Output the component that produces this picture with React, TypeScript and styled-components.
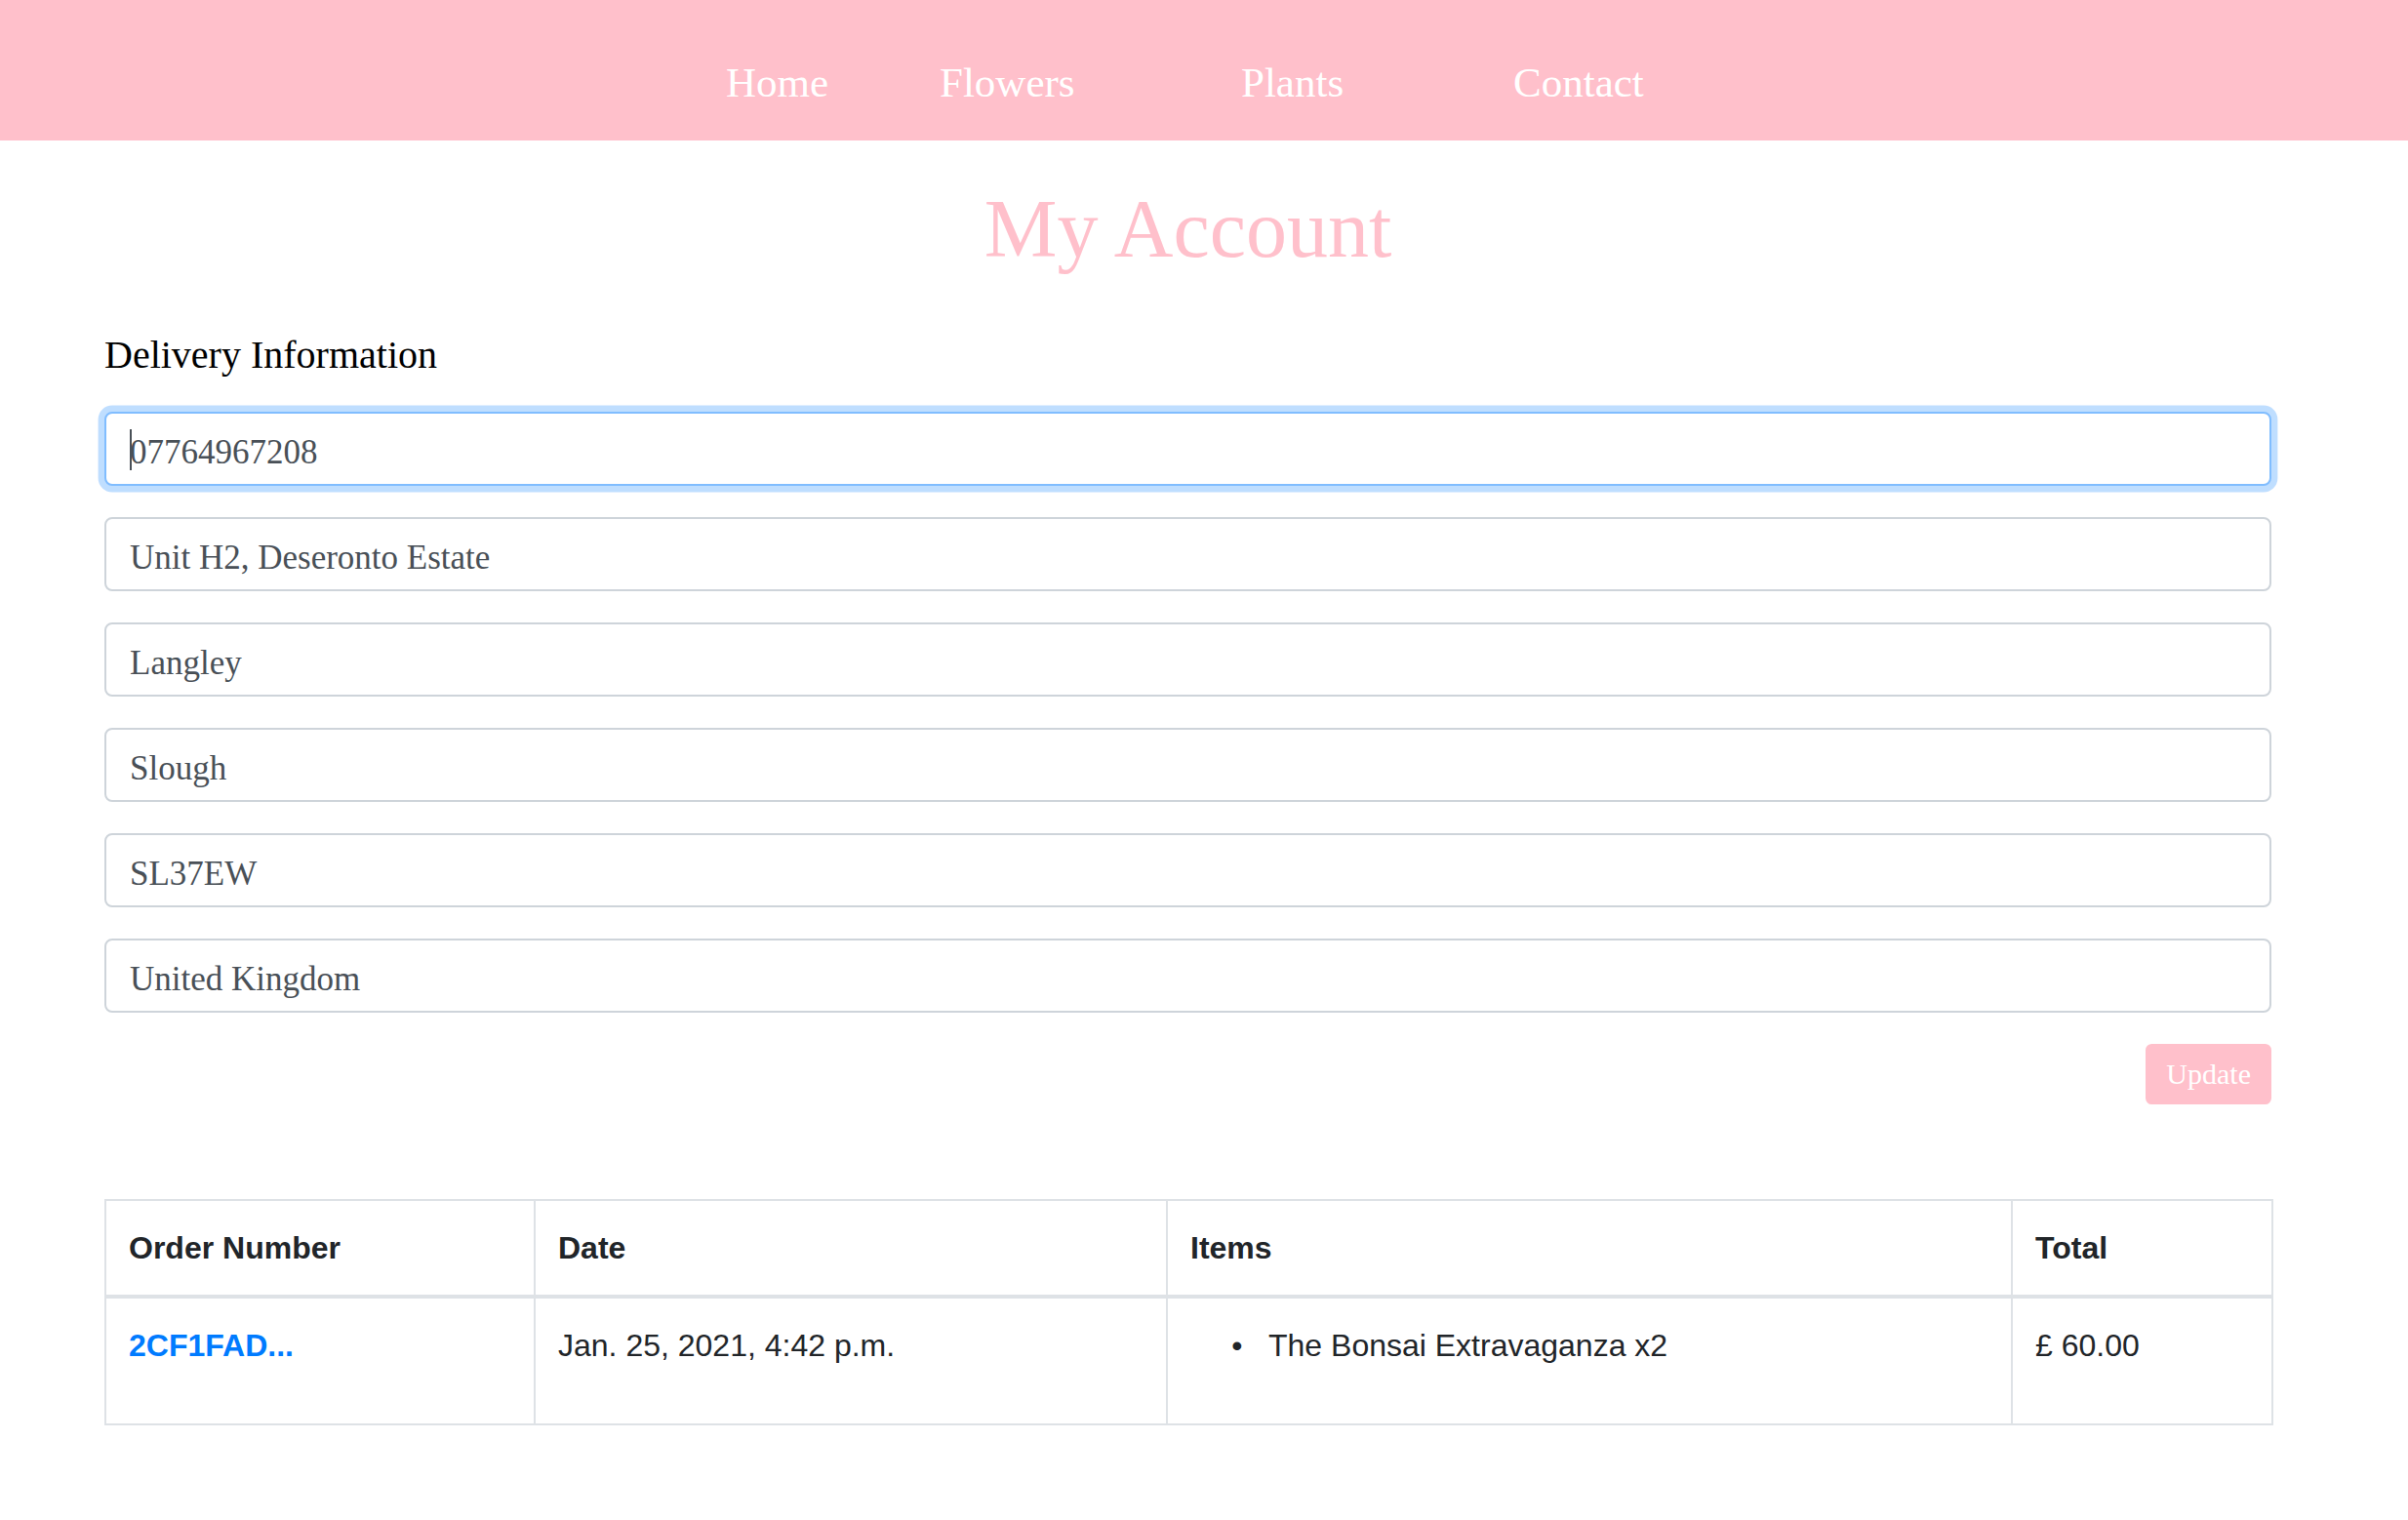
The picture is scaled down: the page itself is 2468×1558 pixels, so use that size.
import React from "react";
import styled, { createGlobalStyle } from "styled-components";

const PINK = "#ffc0cb";

const GlobalStyle = createGlobalStyle`
  html, body {
    margin: 0;
    padding: 0;
    background: #ffffff;
  }
  body {
    font-family: "Liberation Serif", "Times New Roman", serif;
    color: #212529;
  }
  * { box-sizing: border-box; }
`;

const NavBar = styled.nav`
  height: 144px;
  background: ${PINK};
  width: 100%;
`;

const NavList = styled.ul`
  list-style: none;
  margin: 0;
  padding: 60px 32px 0 0;
  display: flex;
  justify-content: center;
`;

const NavItem = styled.li<{ $width: number }>`
  width: ${(p) => p.$width}px;
  flex: 0 0 auto;
`;

const NavLink = styled.a`
  font-family: "Liberation Serif", "Times New Roman", serif;
  font-size: 43px;
  line-height: normal;
  color: #ffffff;
  text-decoration: none;
  white-space: nowrap;
`;

const Page = styled.div`
  padding-right: 33px;
`;

const Container = styled.main`
  width: 2221px;
  margin: 0 auto;
`;

const Title = styled.h1`
  margin: 43px 0 0;
  font-family: "Liberation Serif", "Times New Roman", serif;
  font-weight: 400;
  font-size: 84px;
  line-height: 96px;
  color: ${PINK};
  text-align: center;
`;

const SectionTitle = styled.h5`
  margin: 57px 0 34px;
  font-family: "Liberation Serif", "Times New Roman", serif;
  font-weight: 400;
  font-size: 40px;
  line-height: 48px;
  color: #000000;
`;

const Form = styled.form`
  display: flex;
  flex-direction: column;
`;

const Field = styled.div`
  position: relative;
  margin: 0 0 32px;
`;

const Caret = styled.span`
  position: absolute;
  left: 26px;
  top: 18px;
  width: 2px;
  height: 42px;
  background: #495057;
  pointer-events: none;
`;

const Input = styled.input<{ $focused?: boolean }>`
  display: block;
  width: 100%;
  height: 76px;
  margin: 0;
  padding: 7px 24px 0;
  font-family: "Liberation Serif", "Times New Roman", serif;
  font-size: 35px;
  color: #495057;
  background: #ffffff;
  border: 2px solid ${(p) => (p.$focused ? "#80bdff" : "#ced4da")};
  border-radius: 8px;
  box-shadow: ${(p) => (p.$focused ? "0 0 0 6.4px rgba(0, 123, 255, 0.25)" : "none")};
  outline: none;
  caret-color: transparent;
`;

const ButtonRow = styled.div`
  display: flex;
  justify-content: flex-end;
`;

const UpdateButton = styled.button`
  height: 62px;
  padding: 0 19px;
  background: ${PINK};
  color: #ffffff;
  border: 2px solid ${PINK};
  border-radius: 6.4px;
  font-family: "Liberation Serif", "Times New Roman", serif;
  font-size: 30px;
  line-height: 1;
  cursor: pointer;
`;

const OrdersTable = styled.table`
  margin-top: 97px;
  width: 100%;
  table-layout: fixed;
  border-collapse: collapse;
  border: 2px solid #dee2e6;
  font-family: "Liberation Sans", Arial, sans-serif;
  font-size: 32px;
  line-height: 48px;
  color: #212529;
`;

const HeadCell = styled.th`
  text-align: left;
  font-weight: 700;
  padding: 24px 24px 24px 23px;
  vertical-align: bottom;
  border: 2px solid #dee2e6;
  border-bottom-width: 4px;
`;

const Cell = styled.td`
  padding: 24px 24px 24px 23px;
  vertical-align: top;
  border: 2px solid #dee2e6;
`;

const OrderLink = styled.a`
  color: #007bff;
  font-weight: 700;
  text-decoration: none;
`;

const ItemList = styled.ul`
  margin: 0 0 32px;
  padding-left: 80px;
  li::marker {
    content: "\\2022\\00a0\\00a0\\00a0";
  }
`;

const navItems = [
  { label: "Home", width: 219 },
  { label: "Flowers", width: 309 },
  { label: "Plants", width: 279 },
  { label: "Contact", width: 141 },
];

const fields = [
  "07764967208",
  "Unit H2, Deseronto Estate",
  "Langley",
  "Slough",
  "SL37EW",
  "United Kingdom",
];

const columns = [
  { label: "Order Number", width: 440 },
  { label: "Date", width: 648 },
  { label: "Items", width: 866 },
  { label: "Total", width: 267 },
];

export default function App() {
  return (
    <>
      <GlobalStyle />
      <NavBar>
        <NavList>
          {navItems.map((n) => (
            <NavItem key={n.label} $width={n.width}>
              <NavLink href="#">{n.label}</NavLink>
            </NavItem>
          ))}
        </NavList>
      </NavBar>
      <Page>
        <Container>
          <Title>My Account</Title>
          <SectionTitle>Delivery Information</SectionTitle>
          <Form onSubmit={(e) => e.preventDefault()}>
            {fields.map((f, i) => (
              <Field key={f}>
                <Input type="text" defaultValue={f} $focused={i === 0} />
                {i === 0 && <Caret />}
              </Field>
            ))}
            <ButtonRow>
              <UpdateButton type="submit">Update</UpdateButton>
            </ButtonRow>
          </Form>
          <OrdersTable>
            <colgroup>
              {columns.map((c) => (
                <col key={c.label} style={{ width: c.width }} />
              ))}
            </colgroup>
            <thead>
              <tr>
                {columns.map((c) => (
                  <HeadCell key={c.label}>{c.label}</HeadCell>
                ))}
              </tr>
            </thead>
            <tbody>
              <tr>
                <Cell>
                  <OrderLink href="#">2CF1FAD...</OrderLink>
                </Cell>
                <Cell>Jan. 25, 2021, 4:42 p.m.</Cell>
                <Cell>
                  <ItemList>
                    <li>The Bonsai Extravaganza x2</li>
                  </ItemList>
                </Cell>
                <Cell>£ 60.00</Cell>
              </tr>
            </tbody>
          </OrdersTable>
        </Container>
      </Page>
    </>
  );
}
